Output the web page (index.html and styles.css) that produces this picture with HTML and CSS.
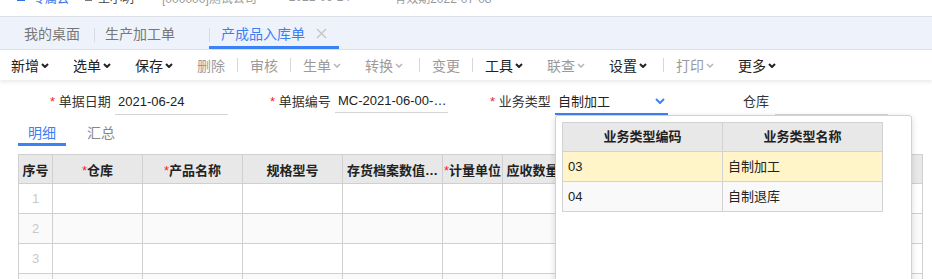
FILE: index.html
```html
<!DOCTYPE html>
<html>
<head>
    <meta charset="utf-8">
    <title>产成品入库单</title>
    <link rel="stylesheet" href="styles.css">
</head>
<body>
    <!-- Top header, scrolled so only its lower edge shows -->
    <div class="topbar">
        <div class="topbar-inner">
            <span class="logo-mark"></span><span class="logo-text">专属云</span>
            <span class="user-icon"></span><span class="user">王小明</span>
            <span class="org">[000000]测试公司</span>
            <span class="meta">2021-06-24</span>
            <span class="meta">有效期2022-07-08</span>
        </div>
    </div>

    <!-- Page tabs -->
    <div class="tabbar">
        <div class="tab tab-home">我的桌面</div>
        <div class="tab">生产加工单<svg class="tab-close tab-close-hidden" viewBox="0 0 11 11"><path d="M1 1L10 10M10 1L1 10"/></svg></div>
        <div class="tab tab-active">产成品入库单<svg class="tab-close" viewBox="0 0 11 11"><path d="M1 1L10 10M10 1L1 10"/></svg></div>
    </div>

    <!-- Toolbar -->
    <div class="toolbar">
        <span class="tb-item">新增<svg class="chev" viewBox="0 0 8 5"><polyline points="1,1 4,4 7,1"/></svg></span>
        <span class="tb-item">选单<svg class="chev" viewBox="0 0 8 5"><polyline points="1,1 4,4 7,1"/></svg></span>
        <span class="tb-item">保存<svg class="chev" viewBox="0 0 8 5"><polyline points="1,1 4,4 7,1"/></svg></span>
        <span class="tb-item tb-off tb-plain">删除</span>
        <span class="tb-sep"></span>
        <span class="tb-item tb-off tb-plain">审核</span>
        <span class="tb-sep"></span>
        <span class="tb-item tb-off">生单<svg class="chev" viewBox="0 0 8 5"><polyline points="1,1 4,4 7,1"/></svg></span>
        <span class="tb-item tb-off">转换<svg class="chev" viewBox="0 0 8 5"><polyline points="1,1 4,4 7,1"/></svg></span>
        <span class="tb-sep"></span>
        <span class="tb-item tb-off tb-plain">变更</span>
        <span class="tb-sep"></span>
        <span class="tb-item">工具<svg class="chev" viewBox="0 0 8 5"><polyline points="1,1 4,4 7,1"/></svg></span>
        <span class="tb-item tb-off">联查<svg class="chev" viewBox="0 0 8 5"><polyline points="1,1 4,4 7,1"/></svg></span>
        <span class="tb-item">设置<svg class="chev" viewBox="0 0 8 5"><polyline points="1,1 4,4 7,1"/></svg></span>
        <span class="tb-sep"></span>
        <span class="tb-item tb-off">打印<svg class="chev" viewBox="0 0 8 5"><polyline points="1,1 4,4 7,1"/></svg></span>
        <span class="tb-item">更多<svg class="chev" viewBox="0 0 8 5"><polyline points="1,1 4,4 7,1"/></svg></span>
    </div>

    <!-- Header fields -->
    <div class="form-row">
        <div class="fg">
            <label class="fg-label"><i class="req">*</i> 单据日期</label>
            <div class="field">2021-06-24</div>
        </div>
        <div class="fg">
            <label class="fg-label"><i class="req">*</i> 单据编号</label>
            <div class="field field-ellipsis">MC-2021-06-00-0001</div>
        </div>
        <div class="fg">
            <label class="fg-label"><i class="req">*</i> 业务类型</label>
            <div class="field field-select">
                自制加工
                <svg class="sel-chev" viewBox="0 0 10 6"><polyline points="1,1 5,5 9,1"/></svg>
                <!-- dropdown list -->
                <div class="dropdown">
                    <table class="dd-table">
                        <thead>
                            <tr><th>业务类型编码</th><th>业务类型名称</th></tr>
                        </thead>
                        <tbody>
                            <tr class="dd-current"><td>03</td><td>自制加工</td></tr>
                            <tr class="dd-alt"><td>04</td><td>自制退库</td></tr>
                        </tbody>
                    </table>
                </div>
            </div>
        </div>
        <div class="fg">
            <label class="fg-label">仓库</label>
            <div class="field"></div>
        </div>
    </div>

    <!-- Detail / summary tabs -->
    <div class="subtabs">
        <span class="subtab subtab-active">明细</span>
        <span class="subtab">汇总</span>
    </div>

    <!-- Detail grid -->
    <table class="grid">
        <colgroup>
            <col style="width:34px"><col style="width:90px"><col style="width:100px">
            <col style="width:100px"><col style="width:100px"><col style="width:60px">
            <col style="width:60px"><col style="width:100px"><col style="width:100px">
            <col style="width:60px"><col style="width:100px">
        </colgroup>
        <thead>
            <tr>
                <th>序号</th>
                <th><i class="req">*</i>仓库</th>
                <th><i class="req">*</i>产品名称</th>
                <th>规格型号</th>
                <th class="th-cut">存货档案数值精度</th>
                <th><i class="req">*</i>计量单位</th>
                <th>应收数量</th>
                <th>实收数量</th>
                <th>单价</th>
                <th>金额</th>
                <th>备注</th>
            </tr>
        </thead>
        <tbody>
            <tr><td class="num">1</td><td></td><td></td><td></td><td></td><td></td><td></td><td></td><td></td><td></td><td></td></tr>
            <tr class="alt"><td class="num">2</td><td></td><td></td><td></td><td></td><td></td><td></td><td></td><td></td><td></td><td></td></tr>
            <tr><td class="num">3</td><td></td><td></td><td></td><td></td><td></td><td></td><td></td><td></td><td></td><td></td></tr>
            <tr class="alt"><td class="num">4</td><td></td><td></td><td></td><td></td><td></td><td></td><td></td><td></td><td></td><td></td></tr>
        </tbody>
    </table>
</body>
</html>
```

FILE: styles.css
```css
* {
    box-sizing: border-box;
}

body {
    margin: 0;
    width: 932px;
    height: 279px;
    overflow: hidden;
    background: #fff;
    color: #333;
    font-family: "Liberation Sans", "Noto Sans CJK SC", sans-serif;
    font-size: 14px;
}

.req {
    font-style: normal;
    font-weight: normal;
    color: #f5222d;
}

/* Top header */
.topbar {
    height: 17px;
    overflow: hidden;
    border-bottom: 1px solid #dcdfe6;
}

.topbar-inner {
    display: flex;
    align-items: center;
    height: 16px;
    margin-top: -11px;
    padding-left: 17px;
    font-size: 12px;
    white-space: nowrap;
    color: #999;
}

.logo-mark {
    width: 8px;
    height: 8px;
    background: #2f6fe8;
    margin-right: 8px;
}

.logo-text {
    color: #3a76e8;
    margin-right: 16px;
}

.user-icon {
    width: 7px;
    height: 8px;
    background: #777;
    margin-right: 6px;
}

.user {
    color: #444;
    margin-right: 28px;
}

.org {
    margin-right: 32px;
}

.meta {
    margin-right: 44px;
}

/* Page tabs */
.tabbar {
    display: flex;
    height: 33px;
    background: #eef3fb;
    border-bottom: 1px solid #dfe4ec;
    padding-left: 13px;
}

.tab {
    position: relative;
    display: flex;
    align-items: center;
    padding: 0 12px 0 11px;
    color: #777;
    font-size: 14px;
}

.tab-home {
    padding-right: 14px;
}

.tab + .tab::before {
    content: "";
    position: absolute;
    left: 0;
    top: 11px;
    height: 14px;
    width: 1px;
    background: #d6dce6;
}

.tab-active {
    color: #3b7ef3;
    padding-left: 12px;
}

.tab-active::after {
    content: "";
    position: absolute;
    left: 0;
    right: 0;
    bottom: 0;
    height: 3px;
    background: #3b82f6;
}

.tab-close {
    margin-left: 11px;
    width: 11px;
    height: 11px;
    fill: none;
    stroke: #c4c4c4;
    stroke-width: 1.4;
}

.tab-close-hidden {
    visibility: hidden;
}

/* Toolbar */
.toolbar {
    position: relative;
    z-index: 1;
    display: flex;
    align-items: center;
    height: 30px;
    padding-left: 11px;
    background: #fff;
    box-shadow: 0 2px 4px rgba(0, 0, 0, 0.09);
    white-space: nowrap;
}

.tb-item {
    display: flex;
    align-items: center;
    margin-right: 20px;
    color: #222;
}

.tb-plain {
    margin-right: 12px;
}

.tb-off {
    color: #9a9a9a;
}

.chev {
    width: 8px;
    height: 5px;
    margin: 1px 4px 0 2px;
    fill: none;
    stroke: currentColor;
    stroke-width: 2;
}

.tb-off .chev {
    stroke: #b5b5b5;
    stroke-width: 1.5;
}

.tb-sep {
    width: 1px;
    height: 14px;
    background: #d8d8d8;
    margin: 0 12px 0 -8px;
}

.tb-plain + .tb-sep {
    margin-left: 0;
}

/* Header fields */
.form-row {
    display: flex;
    padding: 10px 0 0 50px;
    height: 35px;
}

.fg {
    display: flex;
    align-items: flex-start;
    width: 220px;
    height: 25px;
}

.fg-label {
    width: 65px;
    padding-right: 6px;
    line-height: 24px;
    text-align: right;
    font-size: 13px;
    color: #333;
    white-space: nowrap;
}

.field {
    position: relative;
    width: 113px;
    height: 25px;
    line-height: 24px;
    padding-left: 3px;
    font-size: 13px;
    color: #222;
    border-bottom: 1px solid #d4d4d4;
    white-space: nowrap;
}

.field-ellipsis {
    overflow: hidden;
    text-overflow: ellipsis;
    height: 23px;
    line-height: 22px;
}

.field-select {
    border-bottom: 2px solid #3b82f6;
    line-height: 23px;
}

.sel-chev {
    position: absolute;
    right: 3px;
    top: 8px;
    width: 10px;
    height: 6px;
    fill: none;
    stroke: #3b82f6;
    stroke-width: 2;
}

/* Dropdown list */
.dropdown {
    position: absolute;
    z-index: 5;
    left: 0;
    top: 100%;
    margin-top: 2px;
    width: 357px;
    height: 180px;
    padding: 6px 0 0 6px;
    background: #fff;
    border: 1px solid #c9d1e3;
    border-radius: 3px 3px 0 0;
    box-shadow: 0 2px 6px rgba(0, 0, 0, 0.15);
}

.dd-table {
    border-collapse: collapse;
    table-layout: fixed;
    width: 320px;
    font-size: 13px;
    line-height: 16px;
}

.dd-table th,
.dd-table td {
    width: 160px;
    border: 1px solid #d2d2d2;
}

.dd-table th {
    height: 29px;
    background: #e8e8e8;
    font-weight: bold;
    color: #222;
}

.dd-table td {
    height: 30px;
    padding-left: 5px;
    color: #222;
    font-weight: normal;
}

.dd-current td {
    background: #fff5c8;
}

.dd-alt td {
    background: #f9f9f9;
}

/* Sub tabs */
.subtabs {
    display: flex;
    height: 26px;
    margin: 5px 0 0 18px;
}

.subtab {
    display: flex;
    align-items: center;
    padding: 0 10px 3px;
    margin-right: 11px;
    color: #888;
    font-size: 14px;
}

.subtab-active {
    color: #3b7ef3;
    border-bottom: 3px solid #3b82f6;
    padding-bottom: 0;
}

/* Detail grid */
.grid {
    margin: 8px 0 0 18px;
    border-collapse: collapse;
    table-layout: fixed;
    width: 904px;
    font-size: 13px;
}

.grid th,
.grid td {
    border: 1px solid #d0d0d0;
}

.grid th {
    height: 29px;
    background: #e8e8e8;
    color: #222;
    font-weight: bold;
    white-space: nowrap;
    overflow: hidden;
    padding: 0 1px;
}

.grid .th-cut {
    text-overflow: ellipsis;
    text-align: left;
    padding: 0 1px 0 4px;
}

.grid td {
    height: 30px;
}

.grid .alt td {
    background: #fafafa;
}

.grid .num {
    text-align: center;
    color: #c8c8c8;
}
```
